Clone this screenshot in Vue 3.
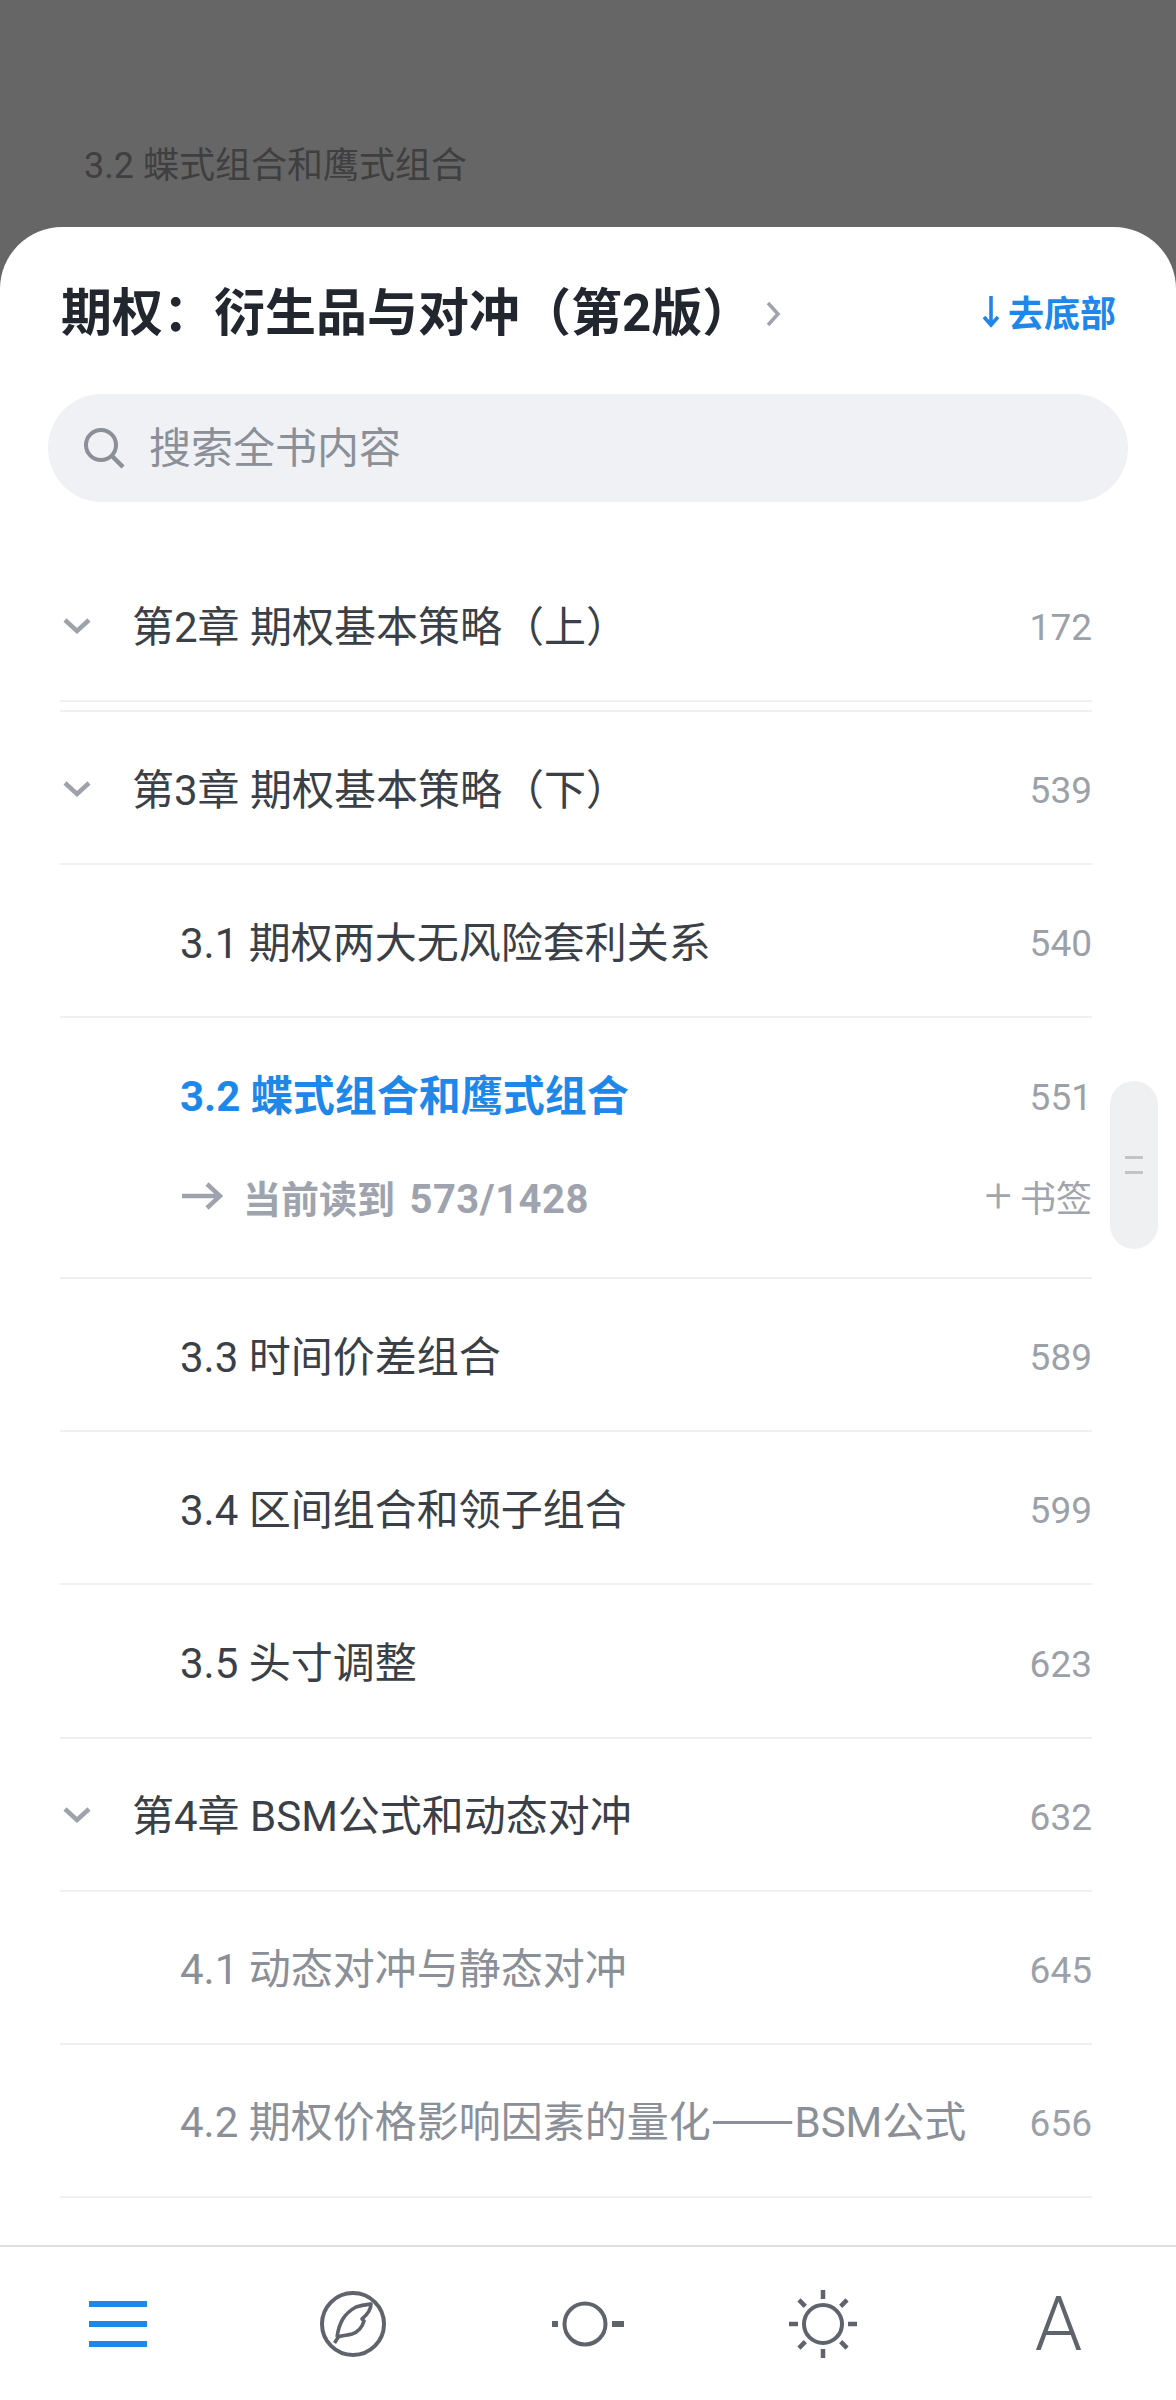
<script setup>
const rows = [
  { id: 'c3', kind: 'chapter ruled', title: '第3章 期权基本策略（下）', page: 539 },
  { id: 's31', kind: 'section', title: '3.1 期权两大无风险套利关系', page: 540 },
  { id: 's32', kind: 'current', title: '3.2 蝶式组合和鹰式组合', page: 551 },
  { id: 's33', kind: 'section', title: '3.3 时间价差组合', page: 589 },
  { id: 's34', kind: 'section', title: '3.4 区间组合和领子组合', page: 599 },
  { id: 's35', kind: 'section', title: '3.5 头寸调整', page: 623 },
  { id: 'c4', kind: 'chapter', title: '第4章 BSM公式和动态对冲', page: 632 },
  { id: 's41', kind: 'section muted', title: '4.1 动态对冲与静态对冲', page: 645 },
  { id: 's42', kind: 'section muted', title: '4.2 期权价格影响因素的量化', dash: '——', tail: 'BSM公式', page: 656 }
]
const rayAngles = [0, 45, 90, 135, 180, 225, 270, 315]
</script>

<template>
  <div class="screen">
    <div class="backdrop">
      <span class="backdrop-text">3.2 蝶式组合和鹰式组合</span>
    </div>

    <div class="sheet">
      <header class="head">
        <div class="book">
          <span class="book-title">期权：衍生品与对冲（第2版）</span>
          <svg class="book-chevron" viewBox="0 0 16 26" width="16" height="26">
            <path d="M3 2 L13 13 L3 24" fill="none" stroke="#9ea3ab" stroke-width="3.5" />
          </svg>
        </div>
        <div class="to-bottom">
          <svg viewBox="0 0 18 34" width="18" height="34">
            <path d="M9 2 V30 M2 23 L9 31 L16 23" fill="none" stroke="#1e87ea" stroke-width="3.6" />
          </svg>
          <span>去底部</span>
        </div>
      </header>

      <div class="search">
        <svg viewBox="0 0 44 44" width="44" height="44">
          <circle cx="19" cy="19" r="15" fill="none" stroke="#8a8f98" stroke-width="4" />
          <path d="M30 30 L41 41" stroke="#8a8f98" stroke-width="4.5" />
        </svg>
        <span class="search-text">搜索全书内容</span>
      </div>

      <div class="list">
        <div class="row chapter first">
          <svg class="row-chevron" viewBox="0 0 28 16" width="28" height="16">
            <path d="M2 2 L14 13 L26 2" fill="none" stroke="#9ea3ab" stroke-width="4.5" />
          </svg>
          <span class="row-title">第2章 期权基本策略（上）</span>
          <span class="row-page">172</span>
        </div>

        <div v-for="row in rows" :key="row.id" class="row" :class="row.kind">
          <template v-if="row.kind === 'current'">
            <div class="current-line">
              <span class="row-title">{{ row.title }}</span>
              <span class="row-page">{{ row.page }}</span>
            </div>
            <div class="current-line progress">
              <svg viewBox="0 0 42 30" width="42" height="30">
                <path d="M1 15 H38 M26 3 L39 15 L26 27" fill="none" stroke="#9ea3ad" stroke-width="4.5" />
              </svg>
              <span class="progress-text">当前读到 <span class="progress-num">573/1428</span></span>
              <span class="mark"><span class="mark-plus">+</span><span>书签</span></span>
            </div>
          </template>
          <template v-else>
            <svg v-if="row.kind.startsWith('chapter')" class="row-chevron" viewBox="0 0 28 16" width="28" height="16">
              <path d="M2 2 L14 13 L26 2" fill="none" stroke="#9ea3ab" stroke-width="4.5" />
            </svg>
            <span class="row-title">{{ row.title }}<span v-if="row.dash" class="cjk-dash">{{ row.dash }}</span>{{ row.tail }}</span>
            <span class="row-page">{{ row.page }}</span>
          </template>
        </div>
      </div>

      <nav class="tabs">
        <div class="tab">
          <svg viewBox="0 0 60 46" width="60" height="46">
            <path d="M1 3 H59 M1 23 H59 M1 43 H59" stroke="#1e87ea" stroke-width="6" />
          </svg>
        </div>
        <div class="tab">
          <svg viewBox="0 0 68 68" width="68" height="68">
            <circle cx="34" cy="34" r="31" fill="none" stroke="#5f646c" stroke-width="4" />
            <path d="M18 47 C20 34 24 24 37 17 C43 15 48 14.5 52 14 C52 20 49 24 43 29 L45 31 C43 38 39 42 33 44 C28 45.5 24 45 19 47 M20 46 L15.5 53" fill="none" stroke="#5f646c" stroke-width="3.6" stroke-linejoin="round" />
          </svg>
        </div>
        <div class="tab">
          <svg viewBox="0 0 72 46" width="72" height="46">
            <circle cx="33" cy="23" r="20.5" fill="none" stroke="#5f646c" stroke-width="4" />
            <path d="M0 23 H6 M60 23 H72" stroke="#5f646c" stroke-width="6" />
          </svg>
        </div>
        <div class="tab">
          <svg viewBox="0 0 70 70" width="70" height="70">
            <circle cx="35" cy="35" r="19" fill="none" stroke="#5f646c" stroke-width="4" />
            <path
              v-for="a in rayAngles"
              :key="a"
              d="M35 1 V10"
              stroke="#5f646c"
              stroke-width="4.5"
              :transform="`rotate(${a} 35 35)`"
            />
          </svg>
        </div>
        <div class="tab tab-font">A</div>
      </nav>

      <div class="handle">
        <i></i>
        <i></i>
      </div>
    </div>
  </div>
</template>

<style scoped>
.screen {
  width: 1176px;
  height: 2400px;
  display: flex;
  flex-direction: column;
  background: #666666;
  font-family: Roboto, "Noto Sans CJK SC", sans-serif;
  overflow: hidden;
}
.backdrop {
  height: 227px;
  flex: none;
  padding: 143px 0 0 84px;
  box-sizing: border-box;
}
.backdrop-text {
  font-size: 36px;
  line-height: 46px;
  color: #3f3f3f;
}
.sheet {
  flex: 1;
  position: relative;
  display: flex;
  flex-direction: column;
  background: #ffffff;
  border-radius: 62px 62px 0 0;
}
.head {
  height: 167px;
  flex: none;
  padding: 0 60px 0 61px;
  box-sizing: border-box;
  display: flex;
  align-items: center;
  justify-content: space-between;
}
.book {
  display: flex;
  align-items: center;
  gap: 12px;
  margin-top: 6px;
}
.book-title {
  font-size: 51px;
  font-weight: 700;
  color: #22262e;
  line-height: 60px;
}
.to-bottom {
  display: flex;
  align-items: center;
  gap: 8px;
  font-size: 36px;
  font-weight: 700;
  color: #1e87ea;
}
.search {
  margin: 0 48px;
  height: 108px;
  flex: none;
  border-radius: 54px;
  background: #f0f1f5;
  display: flex;
  align-items: center;
  gap: 23px;
  padding-left: 34px;
  box-sizing: border-box;
  font-size: 42px;
  color: #8a8f98;
}
.search-text {
  margin-bottom: 8px;
}
.list {
  flex: 1;
  margin: 47px 84px 0 60px;
  display: flex;
  flex-direction: column;
  overflow: hidden;
}
.row {
  height: 153.1px;
  flex: none;
  box-sizing: border-box;
  border-bottom: 2px solid #f0f0f0;
  display: flex;
  align-items: center;
  font-size: 42px;
  color: #3a3f48;
}
.row.first {
  margin-bottom: 8px;
}
.row.ruled {
  height: 155.1px;
  border-top: 2px solid #f0f0f0;
}
.row-title {
  flex: 1;
  min-width: 0;
  white-space: nowrap;
  margin-bottom: 3px;
}
.cjk-dash {
  font-family: "Noto Sans CJK SC", sans-serif;
  font-size: 50px;
  line-height: 1;
}
.row-page {
  font-size: 37px;
  color: #9ca1a9;
  padding-top: 6px;
}
.row-chevron {
  flex: none;
  margin: 2px 0 0 3px;
}
.chapter .row-title {
  margin-left: 41px;
}
.section .row-title,
.current .row-title {
  margin-left: 120px;
}
.muted {
  color: #8a8f98;
}
.current {
  height: 261px;
  flex-direction: column;
  align-items: stretch;
  justify-content: center;
  gap: 44px;
  padding-bottom: 5px;
}
.current-line {
  display: flex;
  align-items: center;
  height: 58px;
}
.current .row-title {
  font-weight: 700;
  color: #1e87ea;
}
.progress {
  padding-left: 121px;
  color: #9ea3ad;
}
.progress-text {
  flex: 1;
  margin-left: 20px;
  font-size: 38px;
  font-weight: 700;
}
.progress-num {
  font-size: 40px;
  margin-left: 5px;
  letter-spacing: 0.5px;
}
.mark {
  display: flex;
  align-items: center;
  gap: 8px;
  font-size: 36px;
  color: #a0a5ad;
}
.mark-plus {
  font-size: 48px;
  font-weight: 300;
  line-height: 1;
}
.tabs {
  height: 155px;
  flex: none;
  border-top: 2px solid #e0e0e0;
  box-sizing: border-box;
  display: flex;
  align-items: center;
}
.tab {
  flex: 1;
  display: flex;
  align-items: center;
  justify-content: center;
}
.tab-font {
  font-size: 76px;
  font-weight: 350;
  line-height: 1;
  color: #5f646c;
}
.handle {
  position: absolute;
  right: 18px;
  top: 854px;
  width: 48px;
  height: 168px;
  border-radius: 24px;
  background: #eff0f2;
  display: flex;
  flex-direction: column;
  align-items: center;
  justify-content: center;
  gap: 12px;
}
.handle i {
  width: 18px;
  height: 3px;
  background: #c4c4c4;
}
</style>
